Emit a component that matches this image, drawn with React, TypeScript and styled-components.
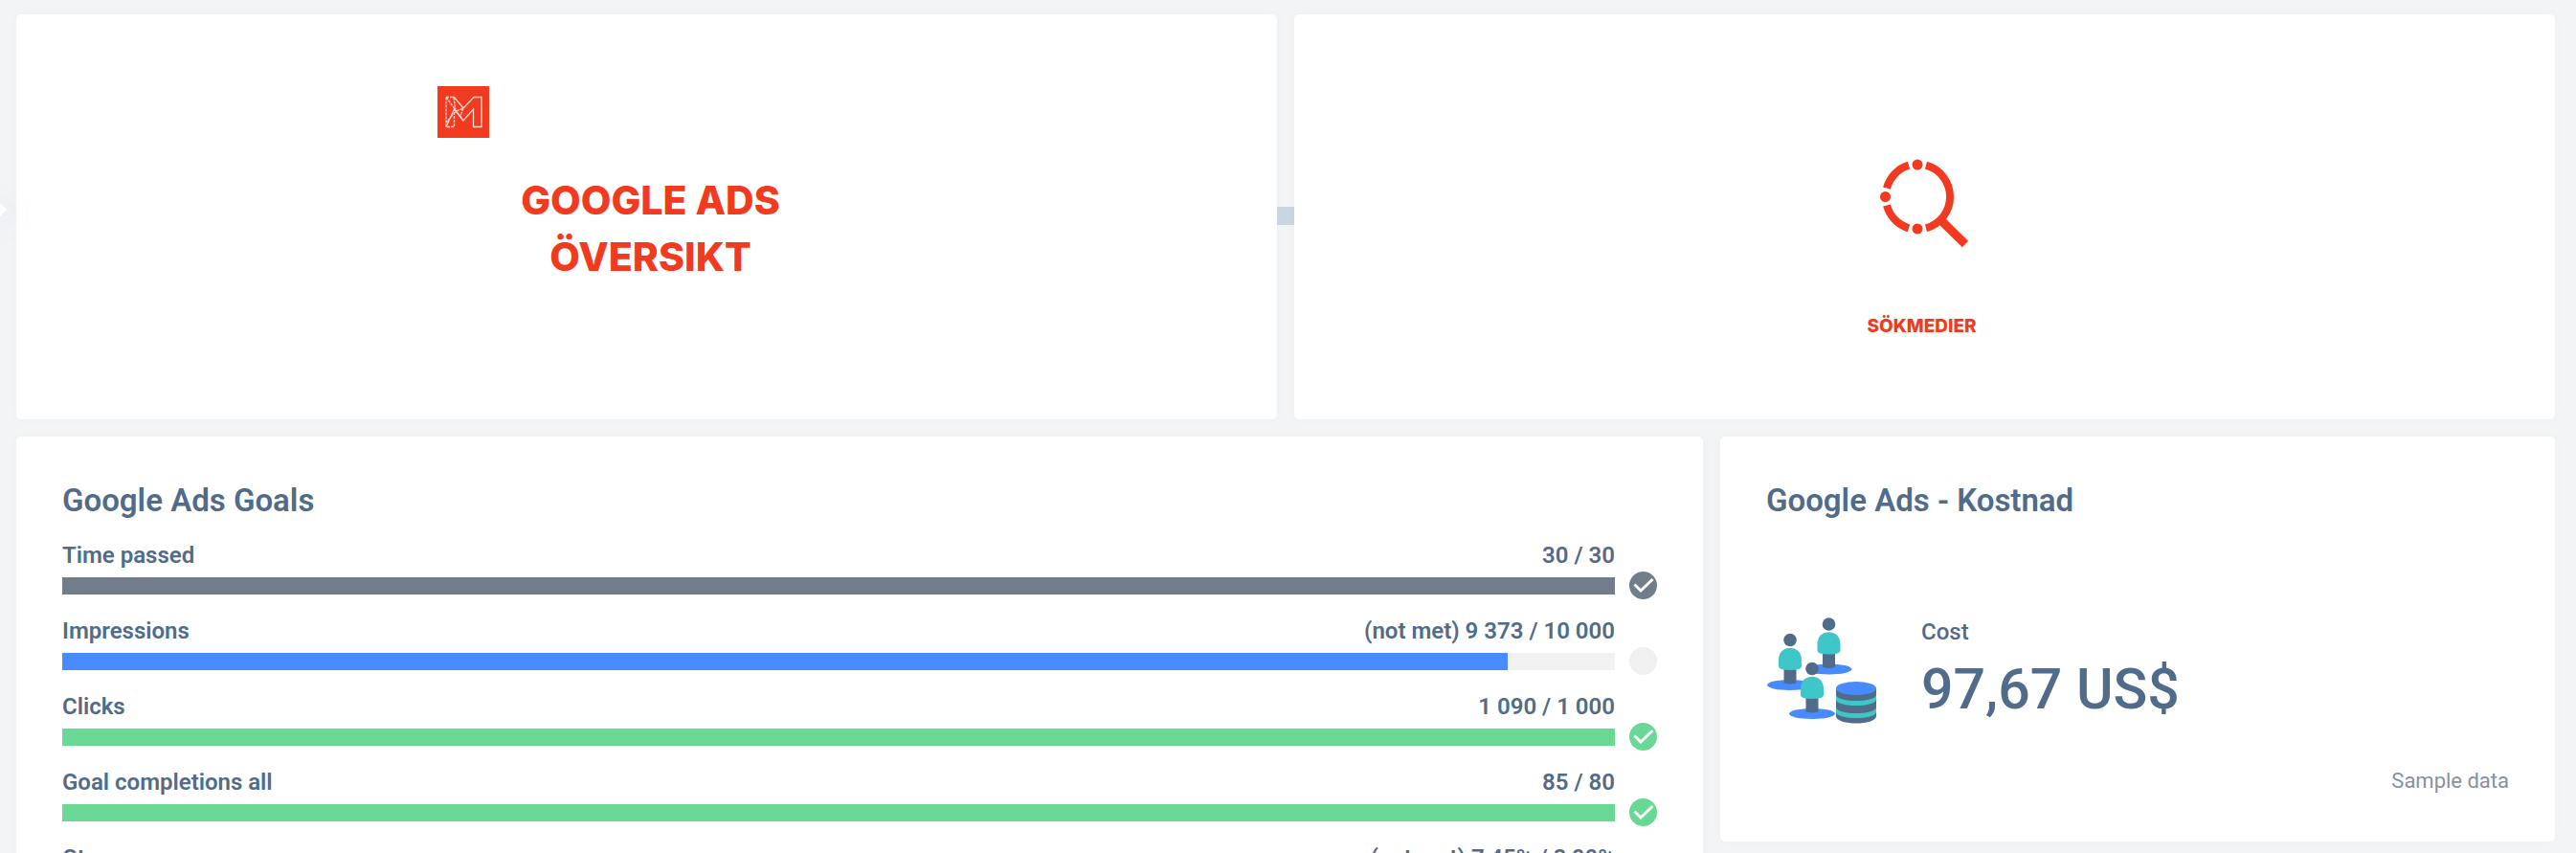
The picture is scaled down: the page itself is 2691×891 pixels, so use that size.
import React from "react";
import styled, { createGlobalStyle } from "styled-components";

const GlobalStyle = createGlobalStyle`
  * { box-sizing: border-box; }
  html, body { margin: 0; overflow: hidden; }
  body { background: #f2f4f6; font-family: Roboto, sans-serif; color: #516b8a; }
  h1, h2, p, ul { margin: 0; padding: 0; }
`;

const Page = styled.main`
  display: grid;
  grid-template-columns: repeat(6, 1fr);
  gap: 18px;
  padding: 15px 22px 18px 17px;
  align-items: start;
`;

const Card = styled.section<{ $span: number }>`
  grid-column: span ${(p) => p.$span};
  min-width: 0;
  min-height: 423px;
  border-radius: 5px;
  background: #fff;
  box-shadow: 0 0 8px rgba(120, 135, 150, 0.04);
`;

const BannerCard = styled(Card)`
  position: relative;
  display: grid;
  justify-items: center;
  align-content: start;
  color: #f13a20;
`;

const Brand = styled.div`
  display: grid;
  gap: 36px;
  padding-top: 75px;
  width: 438px;
`;

const BannerTitle = styled.h1`
  padding-left: 8px;
  font: 800 41px/59px Inter, sans-serif;
  text-align: center;
`;

const Channel = styled.div`
  display: grid;
  justify-items: center;
  gap: 68px;
  padding-top: 150px;
`;

const ChannelName = styled.h2`
  padding-right: 6px;
  font: 800 19px/28px Inter, sans-serif;
`;

const Handle = styled.span`
  position: absolute;
  top: 201px;
  left: 100%;
  width: 18px;
  height: 19px;
  background: #cbd5e0;
`;

const SideTab = styled.button`
  position: absolute;
  top: 207px;
  left: -12px;
  width: 24px;
  height: 24px;
  padding: 0;
  border: 0;
  background: none;
  filter: drop-shadow(0 4px 14px rgba(90, 115, 150, 0.3));

  svg { display: block; }
`;

const DataCard = styled(Card)`
  display: flex;
  flex-direction: column;
  padding: 47px 48px;
`;

const CardTitle = styled.h2`
  font-size: 33px;
  font-weight: 600;
  line-height: 40px;
`;

const GoalList = styled.ul`
  display: grid;
  gap: 17px;
  padding-top: 21px;
  list-style: none;
`;

const Goal = styled.li`
  display: grid;
  grid-template-columns: 1fr 29px;
  column-gap: 15px;
  align-items: center;
`;

const GoalText = styled.div`
  grid-column: 1;
  display: flex;
  justify-content: space-between;
  font-size: 24px;
  font-weight: 600;
  line-height: 33px;
`;

const Track = styled.div`
  grid-column: 1;
  height: 18px;
  background: #f2f2f2;
`;

const Fill = styled.div<{ $color: string }>`
  height: 100%;
  background: ${(p) => p.$color};
`;

const Metric = styled.div`
  display: flex;
  align-items: center;
  gap: 46px;
  padding: 101px 0 0 1px;
`;

const MetricLabel = styled.p`
  font-size: 24px;
  font-weight: 500;
  line-height: 32px;
`;

const MetricValue = styled.p`
  margin-top: 8px;
  font-size: 59px;
  font-weight: 500;
  line-height: 72px;
`;

const Note = styled.p`
  margin-top: auto;
  align-self: flex-end;
  color: #8790a0;
  font-size: 22px;
  line-height: 32px;
`;

const GREEN = "#6ad895";
const GREY = "#727d8c";
const BLUE = "#488bff";

const goals = [
  { name: "Time passed", value: "30 / 30", percent: 100, color: GREY, met: true },
  { name: "Impressions", value: "(not met) 9 373 / 10 000", percent: 93.1, color: BLUE, met: false },
  { name: "Clicks", value: "1 090 / 1 000", percent: 100, color: GREEN, met: true },
  { name: "Goal completions all", value: "85 / 80", percent: 100, color: GREEN, met: true },
  { name: "Ctr", value: "(not met) 7,45% / 8,00%", percent: 93.1, color: BLUE, met: false },
];

const Status = ({ color, met }: { color: string; met: boolean }) => (
  <svg width="29" height="29" viewBox="0 0 29 29" aria-hidden="true">
    <circle cx="14.5" cy="14.5" r="14.5" fill={met ? color : "#f0f0f0"} />
    {met && <path d="M5.500 13.500 12 20 24.500 8" fill="none" stroke="#fff" strokeWidth="3" />}
  </svg>
);

const BrandMark = () => (
  <svg width="54" height="54" viewBox="0 0 54 54" aria-hidden="true">
    <path fill="#f13a20" d="M0 0h54v54H0z" />
    <g fill="none" stroke="#ffd9cf" strokeWidth="1.3">
      <path d="M16 11.500h1.500L27 23l11-11.500h8V42.500h-8.500V24L27 36 17.500 24 9 42.500" />
      <path d="M9 11.500h8M9 11.500V42.500h8.500V24M9 11.500 27 36M17 11.500l2 15 8-3.500-3 8-5-4.500L9 38" strokeDasharray="3 1" />
    </g>
  </svg>
);

const SearchMark = () => (
  <svg width="93" height="94" viewBox="0 0 93 94" aria-hidden="true">
    <g fill="none" stroke="#f13a20" strokeWidth="8">
      <path d="M48 7.700A34 34 0 0 1 48 73.300" />
      <path d="M30 73.300A34 34 0 0 1 7 49.500M7 31.500A34 34 0 0 1 30 7.700" />
      <path strokeWidth="9" d="M62 63.500 89 90" />
    </g>
    <g fill="#f13a20">
      <circle cx="39" cy="7" r="5.500" />
      <circle cx="5.500" cy="40.500" r="5.500" />
      <circle cx="39" cy="74" r="5.500" />
    </g>
  </svg>
);

const Person = ({ x, y }: { x: number; y: number }) => (
  <g transform={`translate(${x} ${y})`}>
    <ellipse cx="0" cy="54" rx="24" ry="5.500" fill="#488bff" />
    <path fill="#516b8a" d="M-6.500 37h13v15q-6.500 2-13 0z" />
    <path fill="#3ec6c9" d="M-12 27.500C-12 11 12 11 12 27.500v7q0 4-12 4t-12-4z" />
    <circle cx="0" cy="7" r="6.800" fill="#516b8a" />
  </g>
);

const PeopleAndCoins = () => (
  <svg width="115" height="111" viewBox="0 0 115 111" aria-hidden="true">
    <Person x={64.500} y={0} />
    <Person x={24} y={16.500} />
    <Person x={47} y={46.500} />
    <path fill="#516b8a" d="M72 74v29c0 10 42 10 42 0V74z" />
    <path fill="#3ec6c9" d="M72 81c2 8 40 8 42 0v5c-2 8-40 8-42 0zM72 94c2 8 40 8 42 0v5c-2 8-40 8-42 0z" />
    <ellipse cx="93" cy="74" rx="21" ry="7" fill="#488bff" />
  </svg>
);

export default function App() {
  return (
    <>
      <GlobalStyle />
      <Page>
        <BannerCard $span={3}>
          <Brand>
            <BrandMark />
            <BannerTitle>
              GOOGLE ADS
              <br />
              ÖVERSIKT
            </BannerTitle>
          </Brand>
          <Handle />
        </BannerCard>
        <BannerCard $span={3}>
          <Channel>
            <SearchMark />
            <ChannelName>SÖKMEDIER</ChannelName>
          </Channel>
        </BannerCard>
        <DataCard $span={4}>
          <CardTitle>Google Ads Goals</CardTitle>
          <GoalList>
            {goals.map((g) => (
              <Goal key={g.name}>
                <GoalText>
                  <span>{g.name}</span>
                  <span>{g.value}</span>
                </GoalText>
                <Track>
                  <Fill $color={g.color} style={{ width: `${g.percent}%` }} />
                </Track>
                <Status color={g.color} met={g.met} />
              </Goal>
            ))}
          </GoalList>
        </DataCard>
        <DataCard $span={2}>
          <CardTitle>Google Ads - Kostnad</CardTitle>
          <Metric>
            <PeopleAndCoins />
            <div>
              <MetricLabel>Cost</MetricLabel>
              <MetricValue>97,67 US$</MetricValue>
            </div>
          </Metric>
          <Note>Sample data</Note>
        </DataCard>
      </Page>
      <SideTab aria-label="Open side panel">
        <svg width="24" height="24" viewBox="0 0 24 24" aria-hidden="true">
          <path d="M12 5 19 12 12 19 5 12z" fill="#fff" />
        </svg>
      </SideTab>
    </>
  );
}
